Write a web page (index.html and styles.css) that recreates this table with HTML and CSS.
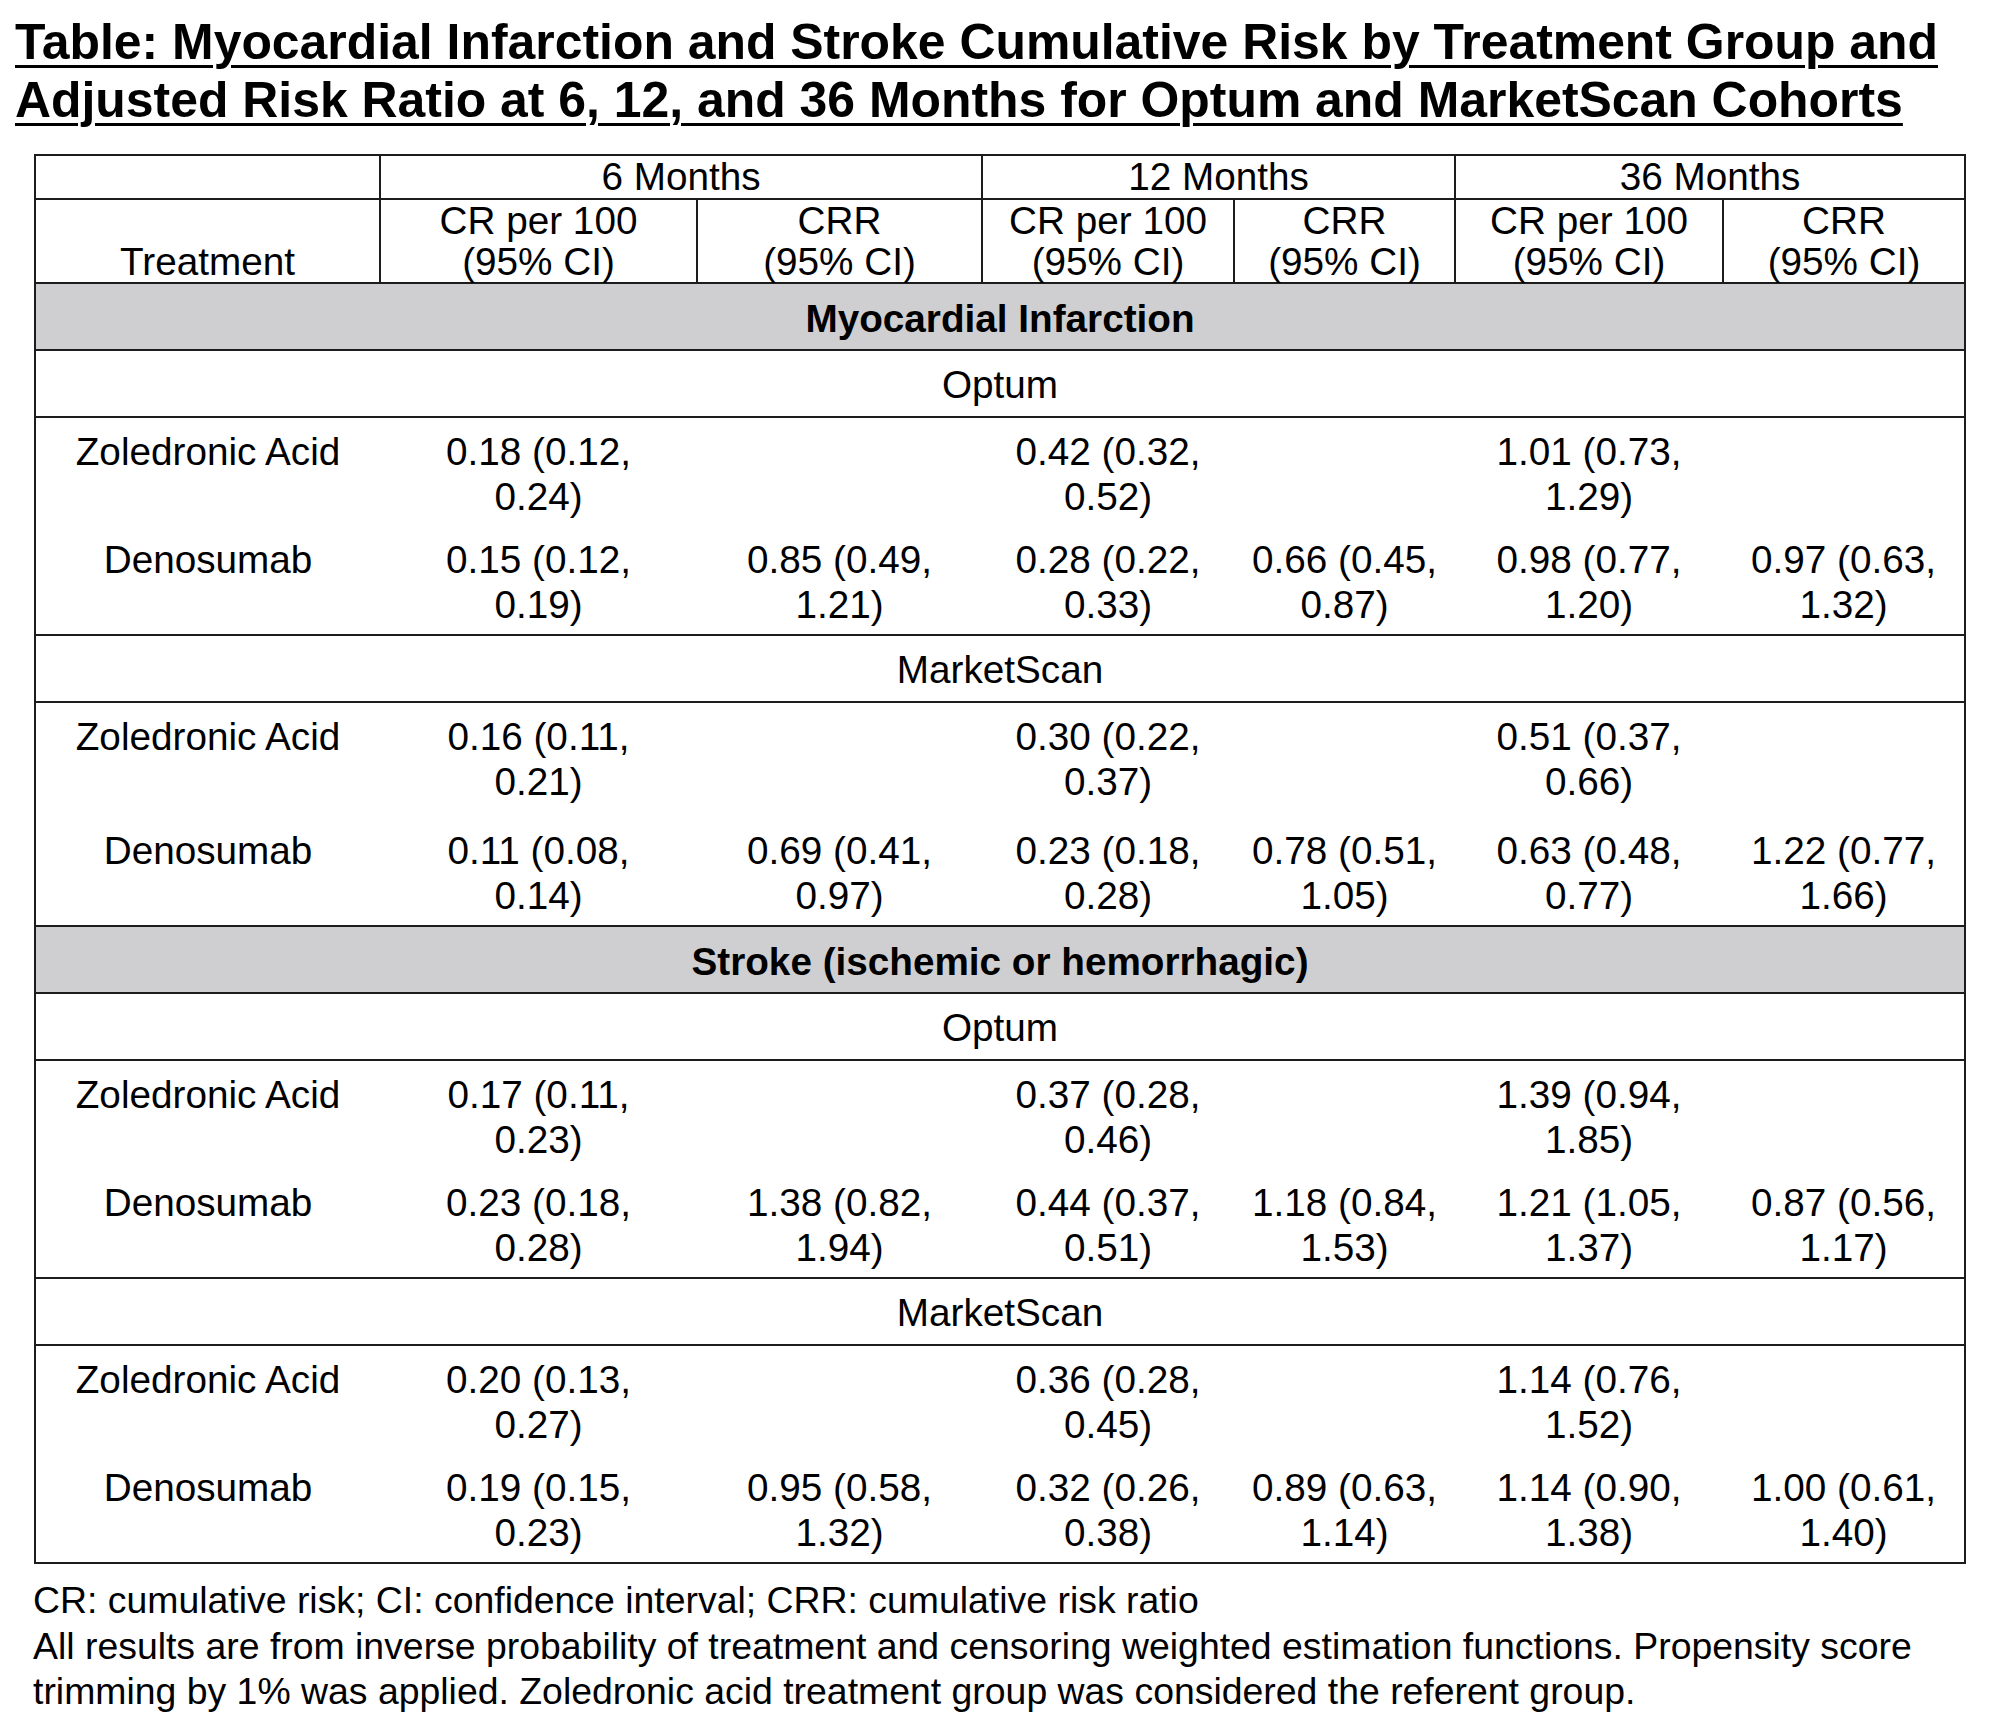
FILE: index.html
```html
<!DOCTYPE html>
<html lang="en">
<head>
<meta charset="utf-8">
<title>Myocardial Infarction and Stroke Cumulative Risk</title>
<link rel="stylesheet" href="styles.css">
</head>
<body>
<div class="page">
  <h1 class="title">Table: Myocardial Infarction and Stroke Cumulative Risk by Treatment Group and<br>Adjusted Risk Ratio at 6, 12, and 36 Months for Optum and MarketScan Cohorts</h1>

  <table class="risk-table">
    <colgroup>
      <col class="c-treat">
      <col class="c-cr6">
      <col class="c-crr6">
      <col class="c-cr12">
      <col class="c-crr12">
      <col class="c-cr36">
      <col class="c-crr36">
    </colgroup>
    <thead>
      <tr class="head-top">
        <th></th>
        <th colspan="2">6 Months</th>
        <th colspan="2">12 Months</th>
        <th colspan="2">36 Months</th>
      </tr>
      <tr class="head-sub">
        <th>Treatment</th>
        <th>CR per 100<br>(95% CI)</th>
        <th>CRR<br>(95% CI)</th>
        <th>CR per 100<br>(95% CI)</th>
        <th>CRR<br>(95% CI)</th>
        <th>CR per 100<br>(95% CI)</th>
        <th>CRR<br>(95% CI)</th>
      </tr>
    </thead>
    <tbody>
      <tr class="group-row"><td colspan="7">Myocardial Infarction</td></tr>
      <tr class="cohort-row"><td colspan="7">Optum</td></tr>
      <tr class="data-row data-row--first">
        <td>Zoledronic Acid</td>
        <td>0.18 (0.12,<br>0.24)</td>
        <td></td>
        <td>0.42 (0.32,<br>0.52)</td>
        <td></td>
        <td>1.01 (0.73,<br>1.29)</td>
        <td></td>
      </tr>
      <tr class="data-row data-row--last">
        <td>Denosumab</td>
        <td>0.15 (0.12,<br>0.19)</td>
        <td>0.85 (0.49,<br>1.21)</td>
        <td>0.28 (0.22,<br>0.33)</td>
        <td>0.66 (0.45,<br>0.87)</td>
        <td>0.98 (0.77,<br>1.20)</td>
        <td>0.97 (0.63,<br>1.32)</td>
      </tr>
      <tr class="cohort-row"><td colspan="7">MarketScan</td></tr>
      <tr class="data-row data-row--first data-row--loose">
        <td>Zoledronic Acid</td>
        <td>0.16 (0.11,<br>0.21)</td>
        <td></td>
        <td>0.30 (0.22,<br>0.37)</td>
        <td></td>
        <td>0.51 (0.37,<br>0.66)</td>
        <td></td>
      </tr>
      <tr class="data-row data-row--last">
        <td>Denosumab</td>
        <td>0.11 (0.08,<br>0.14)</td>
        <td>0.69 (0.41,<br>0.97)</td>
        <td>0.23 (0.18,<br>0.28)</td>
        <td>0.78 (0.51,<br>1.05)</td>
        <td>0.63 (0.48,<br>0.77)</td>
        <td>1.22 (0.77,<br>1.66)</td>
      </tr>
      <tr class="group-row"><td colspan="7">Stroke (ischemic or hemorrhagic)</td></tr>
      <tr class="cohort-row"><td colspan="7">Optum</td></tr>
      <tr class="data-row data-row--first">
        <td>Zoledronic Acid</td>
        <td>0.17 (0.11,<br>0.23)</td>
        <td></td>
        <td>0.37 (0.28,<br>0.46)</td>
        <td></td>
        <td>1.39 (0.94,<br>1.85)</td>
        <td></td>
      </tr>
      <tr class="data-row data-row--last">
        <td>Denosumab</td>
        <td>0.23 (0.18,<br>0.28)</td>
        <td>1.38 (0.82,<br>1.94)</td>
        <td>0.44 (0.37,<br>0.51)</td>
        <td>1.18 (0.84,<br>1.53)</td>
        <td>1.21 (1.05,<br>1.37)</td>
        <td>0.87 (0.56,<br>1.17)</td>
      </tr>
      <tr class="cohort-row"><td colspan="7">MarketScan</td></tr>
      <tr class="data-row data-row--first">
        <td>Zoledronic Acid</td>
        <td>0.20 (0.13,<br>0.27)</td>
        <td></td>
        <td>0.36 (0.28,<br>0.45)</td>
        <td></td>
        <td>1.14 (0.76,<br>1.52)</td>
        <td></td>
      </tr>
      <tr class="data-row data-row--last">
        <td>Denosumab</td>
        <td>0.19 (0.15,<br>0.23)</td>
        <td>0.95 (0.58,<br>1.32)</td>
        <td>0.32 (0.26,<br>0.38)</td>
        <td>0.89 (0.63,<br>1.14)</td>
        <td>1.14 (0.90,<br>1.38)</td>
        <td>1.00 (0.61,<br>1.40)</td>
      </tr>
    </tbody>
  </table>

  <p class="notes">CR: cumulative risk; CI: confidence interval; CRR: cumulative risk ratio<br>All results are from inverse probability of treatment and censoring weighted estimation functions. Propensity score<br>trimming by 1% was applied. Zoledronic acid treatment group was considered the referent group.</p>
</div>
</body>
</html>
```

FILE: styles.css
```css
html, body {
  margin: 0;
  padding: 0;
  background: #ffffff;
}

body {
  font-family: "Liberation Sans", Arial, sans-serif;
  color: #000000;
}

.page {
  width: 2000px;
  padding-top: 13px;
}

.title {
  margin: 0 0 0 15px;
  font-size: 49.9px;
  font-weight: bold;
  line-height: 58px;
  text-decoration: underline;
  text-decoration-thickness: 3px;
  text-underline-offset: 6px;
  white-space: nowrap;
}

.risk-table {
  margin: 25px 0 0 34px;
  border-collapse: collapse;
  table-layout: fixed;
  width: 1930px;
  border: 2px solid #1c1c1c;
  font-size: 38.7px;
}

.c-treat { width: 345px; }
.c-cr6   { width: 317px; }
.c-crr6  { width: 285px; }
.c-cr12  { width: 252px; }
.c-crr12 { width: 221px; }
.c-cr36  { width: 268px; }
.c-crr36 { width: 242px; }

.risk-table th {
  font-weight: normal;
  padding: 0;
  line-height: 41px;
  border: 2px solid #1c1c1c;
  text-align: center;
  vertical-align: bottom;
}

.head-top th {
  padding-bottom: 1px;
}

.head-sub th {
  padding-top: 0;
  padding-bottom: 0;
}

.risk-table td {
  padding: 0;
  text-align: center;
  vertical-align: top;
  line-height: 45px;
}

.group-row td {
  background: #cfcfd1;
  font-weight: bold;
  padding: 12px 0 8px;
  border-top: 2px solid #1c1c1c;
  border-bottom: 2px solid #1c1c1c;
}

.cohort-row td {
  padding: 11px 0 9px;
  border-top: 2px solid #1c1c1c;
  border-bottom: 2px solid #1c1c1c;
}

.data-row td {
  padding: 11px 0 7px;
}

.data-row--loose td {
  padding-bottom: 13px;
}

.notes {
  margin: 14px 0 0 33px;
  font-size: 37.4px;
  line-height: 45.5px;
  white-space: nowrap;
}
```
